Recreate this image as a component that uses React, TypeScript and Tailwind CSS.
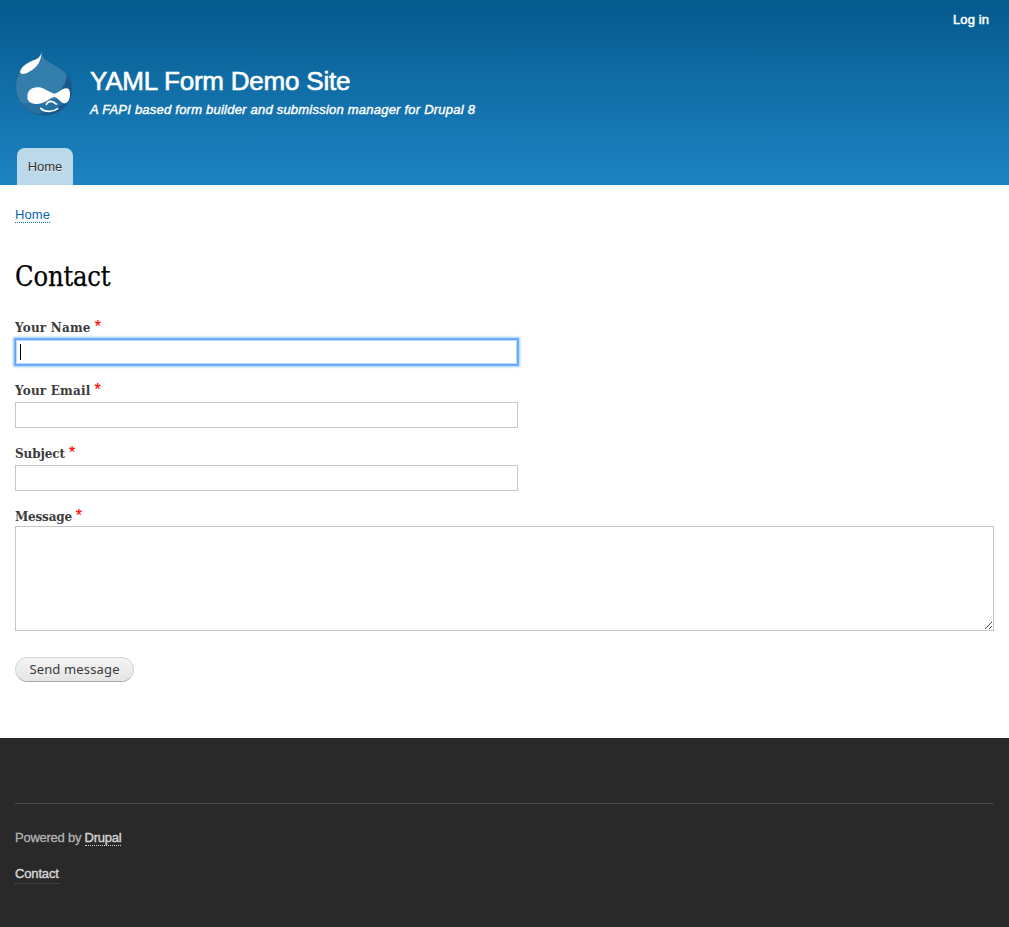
import type { ReactNode } from "react";

const sans = "font-['Liberation_Sans',sans-serif]";
const serif = "font-['DejaVu_Serif',serif]";

function Logo() {
  return (
    <svg className="block h-[65px] w-[57px]" viewBox="45 35 171 195" aria-hidden="true">
      <defs>
        <clipPath id="drop">
          <path d="M125 36C128 57 140 64 154 71C187 88 216 108 216 148C216 196 178 228 132 228C83 228 46 190 46 141C46 112 59 92 78 80C101 68 121 60 125 36Z" />
        </clipPath>
      </defs>
      <g clipPath="url(#drop)">
        <rect x="45" y="35" width="171" height="195" fill="#347eac" />
        <path d="M46 184C64 194 90 192 115 190L217 170V230H46Z" fill="#2770a2" />
        <path d="M198 92C206 122 190 148 163 168C180 180 195 180 198 180C185 204 150 221 115 222L140 230H217V86Z" fill="#17598a" />
      </g>
      <path d="M125 38C128 57 140 64 154 71C187 88 215 108 215 148C215 196 178 227 132 227C83 227 47 190 47 141C47 112 59 92 78 80" fill="none" stroke="#17598a" strokeWidth="2" />
      <path d="M125 38C123 50 116 57 105 61C84 68 60 84 60 99C64 107 76 104 85 99C108 88 123 70 125 38Z" fill="#fff" />
      <path d="M82 173C82 154 94 143 115 144C135 145 147 160 163 163C178 161 184 146 200 147C208 148 210 155 210 164C210 181 203 193 192 192C181 190 173 174 163 173C149 174 138 193 112 194C93 194 82 187 82 173Z" fill="#fff" />
      <path d="M139 195C143 187 151 184 160 188C165 190 165 195 170 194" fill="none" stroke="#fff" strokeWidth="5" strokeLinecap="round" />
      <path d="M122 207C135 219 159 219 173 208" fill="none" stroke="#fff" strokeWidth="5" strokeLinecap="round" />
    </svg>
  );
}

function Label({ children, tracking }: { children: ReactNode; tracking: string }) {
  return (
    <div className={`flex h-[22px] whitespace-nowrap text-[12px] leading-[22px] text-[#3b3b3b] ${serif}`}>
      <span className={`font-bold ${tracking}`}>{children}</span>
      <span className={`ml-1 text-[16px] leading-[20px] text-[#f00] [-webkit-text-stroke:0.2px_#f00] ${sans}`}>*</span>
    </div>
  );
}

export default function App() {
  return (
    <div className={`flex h-[927px] w-full flex-col bg-white text-[13px] ${sans}`}>
      <header className="flex h-[185px] shrink-0 flex-col bg-linear-to-b from-[#055a8e] to-[#1d84c3] text-white">
        <div className="flex h-[51px] justify-end pr-5 pt-2.5">
          <a href="#" className="h-5 leading-5 tracking-[0.1px] [-webkit-text-stroke:0.5px_white]">Log in</a>
        </div>
        <div className="flex h-[97px] pl-[15px]">
          <Logo />
          <div className="ml-[18px] pt-[14px]">
            <h1 className="h-8 whitespace-nowrap text-[26px] leading-8 tracking-[-0.22px] [-webkit-text-stroke:0.6px_white]">YAML Form Demo Site</h1>
            <p className="h-5 whitespace-nowrap pt-[3px] text-[13px] italic leading-5 tracking-[0.225px] [-webkit-text-stroke:0.4px_white]">
              A FAPI based form builder and submission manager for Drupal 8
            </p>
          </div>
        </div>
        <nav className="flex pl-[17px]">
          <a href="#" className="flex h-[37px] w-14 justify-center rounded-t-[8px] bg-[#bbd9eb] text-[13px] leading-[37px] text-[#333] [text-shadow:0_1px_0_#eee]">Home</a>
        </nav>
      </header>
      <main className="flex h-[553px] shrink-0 flex-col px-[15px]">
        <div className="flex h-[73px] pt-[21px]">
          <a href="#" className="h-[17px] border-b border-dotted border-[#0071b3] leading-[17px] tracking-[0.1px] text-[#0865b3]">Home</a>
        </div>
        <h2 className="h-[59px] font-['DejaVu_Serif_Condensed','DejaVu_Serif',serif] text-[27px] leading-[37px] tracking-[-0.15px] text-black [-webkit-text-stroke:0.25px_black]">Contact</h2>
        <form className="flex flex-col" onSubmit={(e) => e.preventDefault()}>
          <div className="h-[63px]">
            <Label tracking="tracking-[0.2px]">Your Name</Label>
            <div className="flex h-[26px] w-[503px] items-center border border-[#64a7f0] bg-white pl-1 shadow-[0_0_0_1px_#73b2f5,0_0_2px_2px_#9dcbfa,inset_0_0_1px_1px_#b5d8fc]">
              <span className="h-4 w-px bg-black" />
            </div>
          </div>
          <div className="h-[63px]">
            <Label tracking="tracking-[0.2px]">Your Email</Label>
            <input aria-label="Your Email" className="block h-[26px] w-[503px] border border-[#c7c7c7] bg-white px-1 outline-none" />
          </div>
          <div className="h-[63px]">
            <Label tracking="tracking-[-0.1px]">Subject</Label>
            <input aria-label="Subject" className="block h-[26px] w-[503px] border border-[#c7c7c7] bg-white px-1 outline-none" />
          </div>
          <Label tracking="tracking-[-0.2px]">Message</Label>
          <div className="-mt-0.5 flex h-[105px] items-end justify-end border border-[#c7c7c7] bg-white">
            <svg className="mb-px mr-px h-[7px] w-[7px]" viewBox="0 0 7 7" fill="none" stroke="#444">
              <path d="M0 7L7 0M4 7L7 4" />
            </svg>
          </div>
          <button className="mt-[26px] h-[25px] w-[119px] whitespace-nowrap rounded-full border border-[#d2d2d2] border-b-[#aaa] bg-linear-to-b from-[#f4f4f4] to-[#e5e5e5] font-['Noto_Sans',sans-serif] text-[13px] leading-[21px] tracking-[0.15px] text-[#3a3a3a]">Send message</button>
        </form>
      </main>
      <footer className="flex h-[189px] shrink-0 flex-col bg-[#292929] px-[15px] pt-[65px]">
        <div className="flex h-[62px] border-t border-[#484848] pt-[26px] text-[#b3b3b3]">
          <span className="whitespace-pre leading-4 tracking-[-0.25px] [-webkit-text-stroke:0.3px_#b3b3b3]">Powered by </span>
          <a href="#" className="h-4 border-b border-dotted border-[#d5d5d5] leading-4 tracking-[-0.25px] text-[#d5d5d5] [-webkit-text-stroke:0.4px_#d5d5d5]">Drupal</a>
        </div>
        <div className="flex">
          <a href="#" className="h-[19px] border-b border-dotted border-[#555] leading-[17px] tracking-[-0.15px] text-[#d5d5d5] [-webkit-text-stroke:0.4px_#d5d5d5]">Contact</a>
        </div>
      </footer>
    </div>
  );
}
